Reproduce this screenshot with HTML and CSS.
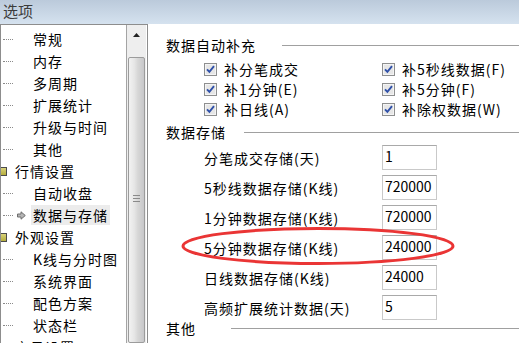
FILE: index.html
```html
<!DOCTYPE html>
<html lang="zh-CN">
<head>
<meta charset="utf-8">
<title>选项</title>
<link rel="stylesheet" href="styles.css">
</head>
<body>
<div class="window">
  <div class="titlebar">选项</div>
  <div class="main">
    <div class="tree">
      <div class="tree-list">
        <div class="row leaf"><span class="dots"></span><span class="slot"></span><span class="label">常规</span></div>
        <div class="row leaf"><span class="dots"></span><span class="slot"></span><span class="label">内存</span></div>
        <div class="row leaf"><span class="dots"></span><span class="slot"></span><span class="label">多周期</span></div>
        <div class="row leaf"><span class="dots"></span><span class="slot"></span><span class="label">扩展统计</span></div>
        <div class="row leaf"><span class="dots"></span><span class="slot"></span><span class="label">升级与时间</span></div>
        <div class="row leaf"><span class="dots"></span><span class="slot"></span><span class="label">其他</span></div>
        <div class="row parent"><span class="picon"></span><span class="label">行情设置</span></div>
        <div class="row leaf"><span class="dots"></span><span class="slot"></span><span class="label">自动收盘</span></div>
        <div class="row leaf selected"><span class="dots"></span><span class="slot"><svg class="arrow" width="9" height="9" viewBox="0 0 9 9"><path d="M0.5 3 H4 V0.8 L8.3 4.5 L4 8.2 V6 H0.5 Z" fill="#b4b4b4" stroke="#6e6e6e" stroke-width="1"/></svg></span><span class="label">数据与存储</span></div>
        <div class="row parent"><span class="picon"></span><span class="label">外观设置</span></div>
        <div class="row leaf"><span class="dots"></span><span class="slot"></span><span class="label">K线与分时图</span></div>
        <div class="row leaf"><span class="dots"></span><span class="slot"></span><span class="label">系统界面</span></div>
        <div class="row leaf"><span class="dots"></span><span class="slot"></span><span class="label">配色方案</span></div>
        <div class="row leaf"><span class="dots"></span><span class="slot"></span><span class="label">状态栏</span></div>
        <div class="row parent"><span class="picon"></span><span class="label">交易设置</span></div>
      </div>
      <div class="scrollbar">
        <div class="sb-up"><svg width="7" height="4" viewBox="0 0 7 4"><path d="M3.5 0 L7 4 H0 Z" fill="#222"/></svg></div>
        <div class="sb-thumb"><div class="grip"></div></div>
      </div>
    </div>
    <div class="content">
      <div class="group-head g1"><span class="ghead-label">数据自动补充</span><span class="gline"></span></div>
      <div class="checks">
        <div class="check"><svg class="cb" width="13" height="13" viewBox="0 0 13 13"><rect x="0.5" y="0.5" width="12" height="12" fill="#f4f4f4" stroke="#8e8f8f"/><rect x="2" y="2" width="9" height="9" fill="#e6e6e6"/><path d="M3 6.3 L5.4 8.8 L10 3.2" fill="none" stroke="#2f50a8" stroke-width="1.9"/></svg><span>补分笔成交</span></div>
        <div class="check"><svg class="cb" width="13" height="13" viewBox="0 0 13 13"><rect x="0.5" y="0.5" width="12" height="12" fill="#f4f4f4" stroke="#8e8f8f"/><rect x="2" y="2" width="9" height="9" fill="#e6e6e6"/><path d="M3 6.3 L5.4 8.8 L10 3.2" fill="none" stroke="#2f50a8" stroke-width="1.9"/></svg><span>补5秒线数据(F)</span></div>
        <div class="check"><svg class="cb" width="13" height="13" viewBox="0 0 13 13"><rect x="0.5" y="0.5" width="12" height="12" fill="#f4f4f4" stroke="#8e8f8f"/><rect x="2" y="2" width="9" height="9" fill="#e6e6e6"/><path d="M3 6.3 L5.4 8.8 L10 3.2" fill="none" stroke="#2f50a8" stroke-width="1.9"/></svg><span>补1分钟(E)</span></div>
        <div class="check"><svg class="cb" width="13" height="13" viewBox="0 0 13 13"><rect x="0.5" y="0.5" width="12" height="12" fill="#f4f4f4" stroke="#8e8f8f"/><rect x="2" y="2" width="9" height="9" fill="#e6e6e6"/><path d="M3 6.3 L5.4 8.8 L10 3.2" fill="none" stroke="#2f50a8" stroke-width="1.9"/></svg><span>补5分钟(F)</span></div>
        <div class="check"><svg class="cb" width="13" height="13" viewBox="0 0 13 13"><rect x="0.5" y="0.5" width="12" height="12" fill="#f4f4f4" stroke="#8e8f8f"/><rect x="2" y="2" width="9" height="9" fill="#e6e6e6"/><path d="M3 6.3 L5.4 8.8 L10 3.2" fill="none" stroke="#2f50a8" stroke-width="1.9"/></svg><span>补日线(A)</span></div>
        <div class="check"><svg class="cb" width="13" height="13" viewBox="0 0 13 13"><rect x="0.5" y="0.5" width="12" height="12" fill="#f4f4f4" stroke="#8e8f8f"/><rect x="2" y="2" width="9" height="9" fill="#e6e6e6"/><path d="M3 6.3 L5.4 8.8 L10 3.2" fill="none" stroke="#2f50a8" stroke-width="1.9"/></svg><span>补除权数据(W)</span></div>
      </div>
      <div class="group-head g2"><span class="ghead-label">数据存储</span><span class="gline"></span></div>
      <div class="storage">
        <div class="srow"><span class="slabel">分笔成交存储(天)</span><span class="field">1</span></div>
        <div class="srow"><span class="slabel">5秒线数据存储(K线)</span><span class="field">720000</span></div>
        <div class="srow"><span class="slabel">1分钟数据存储(K线)</span><span class="field">720000</span></div>
        <div class="srow"><span class="slabel">5分钟数据存储(K线)</span><span class="field">240000</span></div>
        <div class="srow"><span class="slabel">日线数据存储(K线)</span><span class="field">24000</span></div>
        <div class="srow"><span class="slabel">高频扩展统计数据(天)</span><span class="field">5</span></div>
      </div>
      <div class="group-head g3"><span class="ghead-label">其他</span><span class="gline"></span></div>
    </div>
  </div>
  <svg class="mark" width="280" height="44" viewBox="0 0 280 44"><ellipse cx="139" cy="21" rx="135" ry="17.5" fill="none" stroke="#ea3535" stroke-width="3"/></svg>
</div>
</body>
</html>
```
FILE: styles.css
```css
html, body {
  margin: 0;
  padding: 0;
  background: #ffffff;
}
body {
  font-family: "Noto Sans CJK SC", "Noto Sans", sans-serif;
  font-size: 14px;
  color: #000;
}
.window {
  position: relative;
  width: 519px;
  height: 343px;
  overflow: hidden;
  display: flex;
  flex-direction: column;
}
.titlebar {
  height: 24px;
  line-height: 22px;
  padding-left: 3px;
  font-size: 15px;
  color: #3c3c3c;
  background: linear-gradient(#bbcadb, #d5e2ef);
  flex: none;
}
.main {
  flex: 1;
  display: flex;
  min-height: 0;
}
.tree {
  width: 146px;
  border-top: 1px solid #8d8d8d;
  border-left: 1px solid #8d8d8d;
  border-right: 1px solid #8d8d8d;
  display: flex;
  flex: none;
  overflow: hidden;
}
.tree-list {
  width: 125px;
  padding-top: 3px;
  flex: none;
  letter-spacing: 1px;
}
.row {
  height: 22px;
  display: flex;
  align-items: center;
  white-space: nowrap;
}
.dots {
  margin-left: 2px;
  width: 10px;
  height: 0;
  border-top: 1px dotted #8a8a8a;
  flex: none;
}
.slot {
  width: 18px;
  display: flex;
  align-items: center;
  flex: none;
}
.arrow {
  margin-left: 4px;
}
.label {
  padding: 0 2px;
  line-height: 20px;
}
.selected .label {
  background: #ececec;
}
.parent .label {
  margin-left: 6px;
}
.picon {
  width: 6px;
  height: 9px;
  flex: none;
  box-sizing: border-box;
  border: 1px solid #4b4b4b;
  border-left: none;
  background: linear-gradient(#d8d27a, #b5ad3c);
}
.scrollbar {
  width: 19px;
  border-left: 1px solid #a4a4a4;
  background: #eeeeee;
  display: flex;
  flex-direction: column;
  align-items: center;
  flex: none;
}
.sb-up {
  height: 21px;
  display: flex;
  align-items: center;
  justify-content: center;
  padding-top: 3px;
}
.sb-thumb {
  margin-top: 14px;
  width: 17px;
  height: 400px;
  box-sizing: border-box;
  border: 1px solid #9c9c9c;
  border-radius: 2px;
  background: linear-gradient(90deg, #f2f2f2 0%, #e6e6e6 35%, #d6d6d6 60%, #c8c8ca 100%);
  display: flex;
  justify-content: center;
}
.grip {
  margin-top: 137px;
  width: 7px;
  height: 7px;
  background: repeating-linear-gradient(#8a8a8a 0 1px, transparent 1px 3px);
}
.content {
  flex: 1;
  padding-top: 13px;
  padding-left: 18px;
  letter-spacing: 1px;
}
.group-head {
  display: flex;
  align-items: center;
  height: 16px;
  line-height: 16px;
}
.ghead-label {
  flex: none;
}
.g1 .ghead-label { width: 116px; }
.g2 .ghead-label { width: 78px; }
.g3 .ghead-label { width: 65px; }
.gline {
  flex: 1;
  height: 1px;
  background: #a0a0a0;
  margin-top: 1px;
}
.g2 { margin-top: 5px; }
.checks {
  margin-top: 6px;
  margin-left: 38px;
  display: grid;
  grid-template-columns: 178px 1fr;
  grid-auto-rows: 20px;
}
.check {
  display: flex;
  align-items: center;
  white-space: nowrap;
}
.cb {
  flex: none;
  margin-right: 7px;
}
.storage {
  margin-top: 5px;
  margin-left: 38px;
  display: flex;
  flex-direction: column;
  gap: 5px;
}
.srow {
  height: 25px;
  display: flex;
  align-items: center;
}
.slabel {
  width: 178px;
  white-space: nowrap;
}
.field {
  width: 55px;
  height: 25px;
  box-sizing: border-box;
  border: 1px solid #c9c9c9;
  border-top-color: #a9a9a9;
  padding: 1px 0 0 2px;
  line-height: 19px;
  font-size: 14px;
  letter-spacing: 0;
}
.mark {
  position: absolute;
  left: 179px;
  top: 225px;
}
```
